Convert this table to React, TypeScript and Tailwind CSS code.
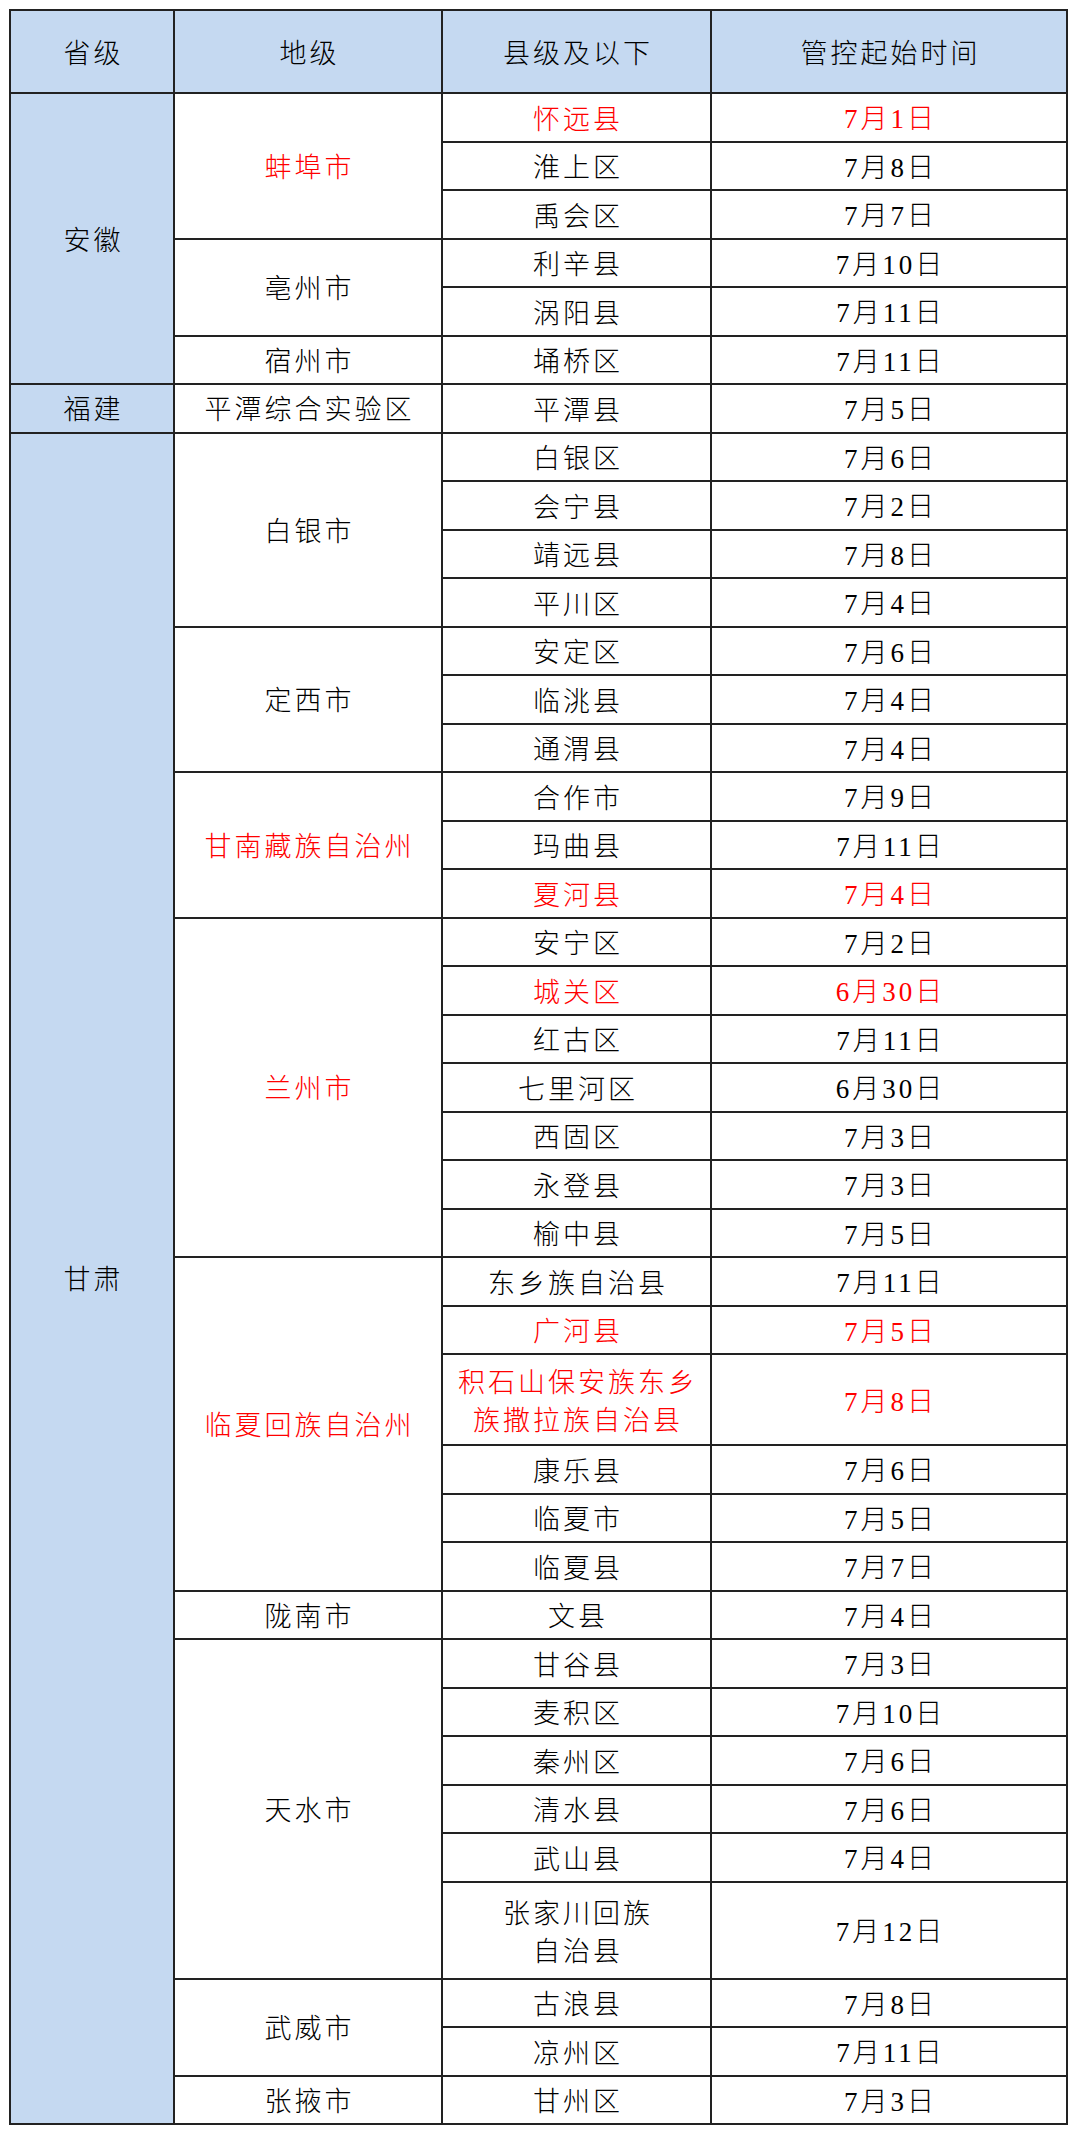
type Item = { name: string; date: string; red?: boolean; tall?: boolean };
type City = { name: string; red?: boolean; items: Item[] };
type Prov = { name: string; cities: City[] };

const data: Prov[] = [
  {
    name: "安徽",
    cities: [
      {
        name: "蚌埠市",
        red: true,
        items: [
          { name: "怀远县", date: "7月1日", red: true },
          { name: "淮上区", date: "7月8日" },
          { name: "禹会区", date: "7月7日" },
        ],
      },
      {
        name: "亳州市",
        items: [
          { name: "利辛县", date: "7月10日" },
          { name: "涡阳县", date: "7月11日" },
        ],
      },
      { name: "宿州市", items: [{ name: "埇桥区", date: "7月11日" }] },
    ],
  },
  {
    name: "福建",
    cities: [{ name: "平潭综合实验区", items: [{ name: "平潭县", date: "7月5日" }] }],
  },
  {
    name: "甘肃",
    cities: [
      {
        name: "白银市",
        items: [
          { name: "白银区", date: "7月6日" },
          { name: "会宁县", date: "7月2日" },
          { name: "靖远县", date: "7月8日" },
          { name: "平川区", date: "7月4日" },
        ],
      },
      {
        name: "定西市",
        items: [
          { name: "安定区", date: "7月6日" },
          { name: "临洮县", date: "7月4日" },
          { name: "通渭县", date: "7月4日" },
        ],
      },
      {
        name: "甘南藏族自治州",
        red: true,
        items: [
          { name: "合作市", date: "7月9日" },
          { name: "玛曲县", date: "7月11日" },
          { name: "夏河县", date: "7月4日", red: true },
        ],
      },
      {
        name: "兰州市",
        red: true,
        items: [
          { name: "安宁区", date: "7月2日" },
          { name: "城关区", date: "6月30日", red: true },
          { name: "红古区", date: "7月11日" },
          { name: "七里河区", date: "6月30日" },
          { name: "西固区", date: "7月3日" },
          { name: "永登县", date: "7月3日" },
          { name: "榆中县", date: "7月5日" },
        ],
      },
      {
        name: "临夏回族自治州",
        red: true,
        items: [
          { name: "东乡族自治县", date: "7月11日" },
          { name: "广河县", date: "7月5日", red: true },
          { name: "积石山保安族东乡\n族撒拉族自治县", date: "7月8日", red: true, tall: true },
          { name: "康乐县", date: "7月6日" },
          { name: "临夏市", date: "7月5日" },
          { name: "临夏县", date: "7月7日" },
        ],
      },
      { name: "陇南市", items: [{ name: "文县", date: "7月4日" }] },
      {
        name: "天水市",
        items: [
          { name: "甘谷县", date: "7月3日" },
          { name: "麦积区", date: "7月10日" },
          { name: "秦州区", date: "7月6日" },
          { name: "清水县", date: "7月6日" },
          { name: "武山县", date: "7月4日" },
          { name: "张家川回族\n自治县", date: "7月12日", tall: true },
        ],
      },
      {
        name: "武威市",
        items: [
          { name: "古浪县", date: "7月8日" },
          { name: "凉州区", date: "7月11日" },
        ],
      },
      { name: "张掖市", items: [{ name: "甘州区", date: "7月3日" }] },
    ],
  },
];

// cell text sits a little low in the source, hence the top padding
const cell = "border-2 border-[#222] text-center align-middle p-0 pt-[5px] pl-[3px]";
const ink = (red?: boolean) => (red ? "text-[#ff0000]" : "text-black");

function Lines({ text }: { text: string }) {
  const parts = text.split("\n");
  return (
    <div className="leading-[38px]">
      {parts.map((p, i) => (
        <div key={i}>{p}</div>
      ))}
    </div>
  );
}

export default function App() {
  const rows: React.ReactNode[] = [];

  data.forEach((prov) => {
    const provSpan = prov.cities.reduce((n, c) => n + c.items.length, 0);
    prov.cities.forEach((city, ci) => {
      city.items.forEach((item, ii) => {
        const h = item.name.startsWith("积石山")
          ? "h-[91px]"
          : item.tall
          ? "h-[97px]"
          : "h-[48.5px]";
        rows.push(
          <tr key={prov.name + city.name + item.name} className={h}>
            {ci === 0 && ii === 0 && (
              <td rowSpan={provSpan} className={`${cell} bg-[#c5d9f1] text-black`}>
                {prov.name}
              </td>
            )}
            {ii === 0 && (
              <td rowSpan={city.items.length} className={`${cell} ${ink(city.red)}`}>
                {city.name}
              </td>
            )}
            <td className={`${cell} ${ink(item.red)}`}>
              <Lines text={item.name} />
            </td>
            <td className={`${cell} ${ink(item.red)}`}>{item.date}</td>
          </tr>
        );
      });
    });
  });

  return (
    <div className="min-h-[2132px] w-[1080px] bg-white pt-[9px] pl-[9px]">
      <table
        className="w-[1059px] table-fixed border-collapse border-2 border-[#222] text-[27px] leading-none tracking-[3px] font-light"
        style={{ fontFamily: '"Liberation Serif", "Noto Sans CJK SC", serif' }}
      >
        <colgroup>
          <col className="w-[164px]" />
          <col className="w-[268px]" />
          <col className="w-[269px]" />
          <col className="w-[356px]" />
        </colgroup>
        <thead>
          <tr className="h-[83px] bg-[#c5d9f1]">
            <th className={`${cell} font-light text-black`}>省级</th>
            <th className={`${cell} font-light text-black`}>地级</th>
            <th className={`${cell} font-light text-black`}>县级及以下</th>
            <th className={`${cell} font-light text-black`}>管控起始时间</th>
          </tr>
        </thead>
        <tbody>{rows}</tbody>
      </table>
    </div>
  );
}
